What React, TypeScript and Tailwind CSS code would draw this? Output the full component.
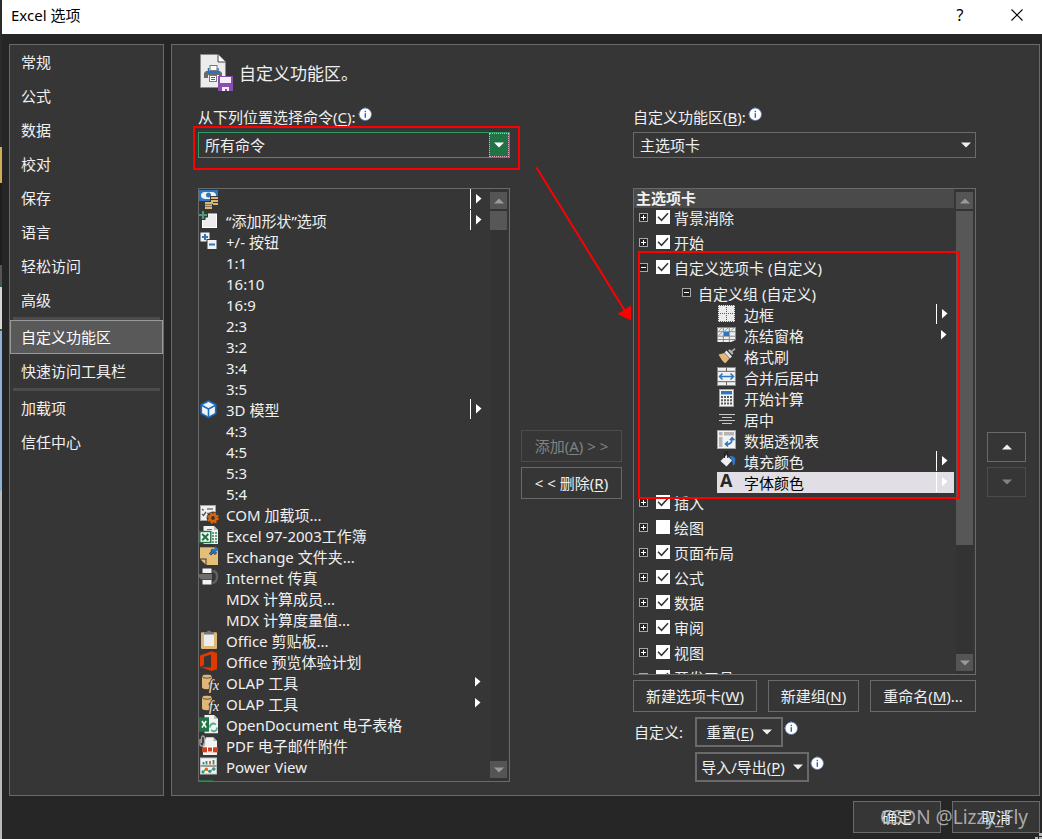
import type { ReactNode } from "react";
import { clsx } from "clsx";

/* ---------- small glyphs ---------- */

function Caret({ dir, className }: { dir: "up" | "down" | "right"; className?: string }) {
  if (dir === "right") {
    return (
      <svg width="6" height="10" viewBox="0 0 6 10" className={className} aria-hidden="true">
        <path d="M0 0 L5.5 4.5 L0 9.5 Z" fill="currentColor" />
      </svg>
    );
  }
  return (
    <svg width="10" height="6" viewBox="0 0 10 6" className={className} aria-hidden="true">
      <path d={dir === "down" ? "M0 0.5 H10 L5 5.5 Z" : "M0 5.5 H10 L5 0.5 Z"} fill="currentColor" />
    </svg>
  );
}

function InfoIcon() {
  return (
    <svg width="14" height="14" viewBox="0 0 14 14" className="shrink-0" aria-hidden="true">
      <path d="M7 0 L8.5 1.5 H5.5 Z M0 7 L1.5 5.5 V8.5 Z" fill="#5d7fb5" />
      <circle cx="7.3" cy="7.3" r="6.2" fill="#fff" stroke="#5878b0" strokeWidth="0.8" />
      <rect x="6.6" y="3.8" width="1.4" height="1.4" fill="#3f5f9f" />
      <rect x="6.6" y="6.2" width="1.4" height="4.6" fill="#3f5f9f" />
    </svg>
  );
}

function RibbonIcon() {
  return (
    <svg width="35" height="38" viewBox="0 0 35 38" className="shrink-0" aria-hidden="true">
      <path d="M0.5 0.5 H18 L25.5 8 V33.5 H0.5 Z" fill="#ececec" stroke="#8a8a8a" />
      <path d="M18 0.5 V8 H25.5" fill="#fff" stroke="#444" />
      <path d="M4 19 L6 17 H20 L22 19 V24 H19 V21 H8 V24 H4 Z" fill="#6a6a6a" />
      <path d="M8.5 14 V18.5 H18 V14" fill="none" stroke="#2f6eb5" strokeWidth="1.5" />
      <rect x="10" y="11.5" width="7" height="5" fill="#fff" stroke="#777" />
      <rect x="9.5" y="21.5" width="7" height="6" fill="#fff" stroke="#777" />
      <path d="M11 23.5 H15 M11 25.5 H15" stroke="#2f6eb5" />
      <rect x="18" y="22" width="15" height="15" fill="#8a4fae" />
      <rect x="20" y="23" width="11" height="6" fill="#f5eefa" />
      <path d="M22 33 H29 V37 H27 V35 H25 V37 H22 Z" fill="#f5eefa" />
    </svg>
  );
}

/* ---------- command icons, drawn on a 20 x 21 field ---------- */

const icons: Record<string, ReactNode> = {
  money: (
    <>
      <rect x="0" y="1" width="19" height="11" fill="#2f76c0" />
      <path d="M2 6.5 Q2 3 6 3 H13 Q17 3 17 6.5 Q15 10 10 10 H6 Q2 9.5 2 6.5" fill="#f1f1f1" />
      <circle cx="9.5" cy="6" r="2.5" fill="#2f76c0" />
      <path d="M11 7 H20 V18 H14 V20 H5 V12 H11 Z" fill="#363636" />
      <path d="M12 9 H19 M12 12 H19 M14 15 H19 M6 14 H14 M6 16.5 H13 M6 19 H13" stroke="#dcb572" strokeWidth="2" />
    </>
  ),
  addShape: (
    <>
      <rect x="3.5" y="4" width="14" height="13.5" fill="#ececec" stroke="#fff" />
      <path d="M4 0 V10 M-1 5 H9" stroke="#363636" strokeWidth="5" />
      <path d="M4 1 V9 M0 5 H8" stroke="#4c9a7b" strokeWidth="2.2" />
    </>
  ),
  plusMinus: (
    <>
      <rect x="1.5" y="1.5" width="9" height="9" fill="#f2f2f2" />
      <path d="M6 3 V9 M3 6 H9" stroke="#2f76c0" strokeWidth="2" />
      <rect x="7.5" y="8" width="11" height="11" fill="#363636" />
      <rect x="8.5" y="9" width="9" height="9" fill="#f2f2f2" />
      <path d="M10 13.5 H16" stroke="#2f76c0" strokeWidth="2" />
    </>
  ),
  cube: (
    <>
      <path d="M9.5 2 L16.7 5.8 V14.5 L9.5 18.4 L2.3 14.5 V5.8 Z" fill="#f4f4f4" stroke="#1b6fc2" strokeWidth="1.6" />
      <path d="M3 6.5 L9.5 10 L16 6.5 M9.5 10 V18" fill="none" stroke="#1b6fc2" strokeWidth="1.6" />
    </>
  ),
  com: (
    <>
      <rect x="1.5" y="1.5" width="15" height="15" fill="#f0f0f0" stroke="#a5a5a5" />
      <path d="M8 5 H14 M8 9.5 H13" stroke="#777" strokeWidth="1.5" />
      <path d="M3 5 L4.5 6.5 M3 10 L4.5 11.5 L7 8" fill="none" stroke="#555" strokeWidth="1.3" />
      <circle cx="14" cy="14" r="6.4" fill="#363636" />
      <circle cx="14" cy="14" r="3.2" fill="none" stroke="#d9650f" strokeWidth="2.6" />
      <circle cx="14" cy="14" r="4.9" fill="none" stroke="#d9650f" strokeWidth="1.8" strokeDasharray="2.2 1.65" />
    </>
  ),
  xls: (
    <>
      <path d="M4.5 1 H15 L19 5 V19 H4.5 Z" fill="#f2f2f2" />
      <path d="M15 1 V5 H19" fill="#bbb" />
      <path d="M8 4.5 H13" stroke="#777" />
      <path d="M13 8 H18 M13 11 H18 M13 14 H18 M13 17 H18" stroke="#56a57c" strokeWidth="2" />
      <path d="M15.5 6.5 V18" stroke="#f2f2f2" />
      <rect x="0.8" y="6.5" width="11" height="11" fill="#f5f5f5" stroke="#217346" strokeWidth="1.4" />
      <path d="M3.2 9 L9.3 15.2 M9.3 9 L3.2 15.2" stroke="#217346" strokeWidth="2" />
    </>
  ),
  note: (
    <>
      <rect x="1" y="1.3" width="18" height="17.7" fill="#e3bf79" />
      <path d="M1 12.5 H7.5 V19 H1 Z" fill="#363636" />
      <path d="M1.5 13.5 H6.5 V18.5 Z" fill="#e3bf79" />
      <path d="M11 8.5 L13.5 6 M12.5 3.5 L17 8 M16 0.5 L19.5 4" stroke="#3a3a3a" strokeWidth="3" />
      <path d="M11 8.5 L13.5 6 M12.5 3.5 L17 8 M15.5 1 L19.3 4.5" stroke="#2f76c0" strokeWidth="1.7" />
      <path d="M14 4 L16.5 2 L18.5 4 L16.5 6.5 Z" fill="#2f76c0" />
    </>
  ),
  fax: (
    <>
      <path d="M0 7 H13 V12.5 H2 L0 10 Z" fill="#6d6d6d" />
      <rect x="3.5" y="1.5" width="9" height="4.5" fill="#f4f4f4" />
      <rect x="3.5" y="13" width="9" height="4.5" fill="#f4f4f4" />
      <path d="M13.5 4 Q18 4 18 9.5 Q18 15 13.5 16" fill="none" stroke="#606060" strokeWidth="2.4" />
    </>
  ),
  clipboard: (
    <>
      <rect x="2" y="2.3" width="16" height="16.7" rx="1" fill="#dfb878" />
      <rect x="5" y="4" width="10" height="12" fill="#ededed" />
      <path d="M5 4.5 V2 H8 Q8 0.5 10 0.5 Q12 0.5 12 2 H15 V4.5 Z" fill="#777" />
    </>
  ),
  office: (
    <path
      fillRule="evenodd"
      fill="#e03a00"
      d="M1 4.5 L12.5 0.3 L18 2 V18.2 L12.5 20 L1 15.8 Z M5 5.8 V14.2 L12 16.5 V3.5 Z M1 15.8 L5 14.2 L12 16.8 Z"
    />
  ),
  olap: (
    <>
      <path d="M3 4.5 V15 Q3 17.2 8 17.2 Q13 17.2 13 15 V4.5 Z" fill="#dfb878" />
      <ellipse cx="8" cy="4.2" rx="5" ry="2" fill="#dfb878" stroke="#363636" strokeWidth="0.8" />
      <text
        x="10"
        y="17.5"
        fontFamily="Liberation Serif, serif"
        fontStyle="italic"
        fontSize="14"
        fill="#efefef"
        stroke="#363636"
        strokeWidth="2"
        paintOrder="stroke"
      >
        fx
      </text>
    </>
  ),
  ods: (
    <>
      <path d="M5.5 1 H15 L19 5 V19.3 H5.5 Z" fill="#f2f2f2" />
      <path d="M15 1 V5 H19" fill="#bbb" />
      <path d="M11 13.5 Q11 9.5 15 9.5 L17 10.5 M18 13.5 Q18 17.3 14.3 17.3 L12 16" fill="none" stroke="#56b08a" strokeWidth="1.8" />
      <rect x="0" y="3.3" width="10" height="14.4" fill="#217346" />
      <path d="M3 7 L7.2 13.6 M7.2 7 L3 13.6" stroke="#fff" strokeWidth="1.6" />
    </>
  ),
  pdf: (
    <>
      <path d="M7 2.3 H14.5 L18 6 V20 H4 V10 Z" fill="#f2f2f2" />
      <path d="M14.5 2.3 V6 H18" fill="#aaa" />
      <rect x="3" y="12.3" width="16" height="5" fill="#d0401c" />
      <rect x="8.5" y="12" width="5" height="5" fill="#d0401c" stroke="#fff" />
      <path d="M1 4 V9 Q1 11 3.2 11 Q5.5 11 5.5 9 V3 Q5.5 1 3.5 1 Q2.5 1 2.5 3 V8" fill="none" stroke="#a5a5a5" strokeWidth="1.3" />
    </>
  ),
  powerView: (
    <>
      <rect x="1.5" y="2" width="16" height="16" fill="#f2f2f2" stroke="#c5c5c5" />
      <path d="M1.5 10 H17.5" stroke="#777" strokeWidth="1.4" />
      <path d="M4.5 8.5 V6 M7.5 8.5 V5 M14.5 8.5 V4" stroke="#3b8f78" strokeWidth="1.8" />
      <path d="M11 8.5 V5" stroke="#d9650f" strokeWidth="1.8" />
      <path d="M4 16 L7 13 L10 15.5 L15 12.5" fill="none" stroke="#3b8f78" />
      <circle cx="4" cy="15.8" r="1.6" fill="#3b8f78" />
      <circle cx="7.3" cy="13.3" r="1.7" fill="#d9650f" />
      <circle cx="10.8" cy="15.3" r="1.6" fill="#3b8f78" />
      <circle cx="14.8" cy="13" r="1.8" fill="#3b8f78" />
    </>
  ),
  sheet: <rect x="0" y="3" width="14" height="14" fill="#217346" />,
  borders: (
    <>
      <rect x="1" y="1" width="17" height="17" fill="#ececec" />
      <path
        d="M1 1.5 H18 M1 9.5 H18 M1 17.5 H18 M1.5 1 V18 M9.5 1 V18 M17.5 1 V18"
        stroke="#5a5a5a"
        strokeDasharray="1 1"
        shapeRendering="crispEdges"
      />
    </>
  ),
  freeze: (
    <>
      <path d="M0.5 2.5 H18.5 V15 L14 17 H0.5 Z" fill="#f0f0f0" />
      <path d="M0.5 6.7 H18.5 M0.5 11.2 H18.5 M0.5 14.5 H15 M6.3 3 V17 M12.3 3 V17" stroke="#8a8a8a" />
      <rect x="7" y="7" width="5" height="4" fill="#2f76c0" />
      <path d="M1.5 6 L5 3 M7.5 6 L11 3 M13.5 6 L17 3 M1.5 10.5 L5 7.5" stroke="#6ea3dc" />
      <rect x="0.5" y="2.5" width="18" height="12" fill="none" stroke="#8a8a8a" />
    </>
  ),
  brush: (
    <>
      <path d="M1.5 8.5 L7.5 7 L12.5 12.5 L8.5 17.3 Q6 16 4.5 13.5 Z" fill="#e0b877" />
      <path d="M8.5 5.5 L14 11.5" stroke="#e6e6e6" strokeWidth="2.6" />
      <path d="M11 4.5 L15 8.8 L16.5 7.2 L15.2 6 L18.5 3.2 L17.5 2 L14.5 4.8 L12.8 3.2 Z" fill="#b5b5b5" />
    </>
  ),
  merge: (
    <>
      <rect x="0.5" y="0.5" width="18" height="18" fill="#f0f0f0" stroke="#8a8a8a" />
      <path d="M0.5 4.3 H18.5 M0.5 14.7 H18.5 M9.5 0.5 V4.3 M9.5 14.7 V18.5" stroke="#666" />
      <path d="M3 9.5 H16 M5.5 6.5 L2.5 9.5 L5.5 12.5 M13.5 6.5 L16.5 9.5 L13.5 12.5" fill="none" stroke="#2f76c0" strokeWidth="1.5" />
    </>
  ),
  calculator: (
    <>
      <rect x="2.5" y="1.5" width="14" height="17" fill="#f4f4f4" stroke="#a5a5a5" />
      <rect x="4" y="3" width="11" height="3.4" fill="#2f76c0" />
      <path d="M4 9 H15 M4 12.3 H15 M4 15.6 H15" stroke="#5a5a5a" strokeWidth="2" strokeDasharray="2 1" />
    </>
  ),
  center: <path d="M2 5.5 H18 M5 8.5 H15 M2 11.5 H18 M5 14.5 H15" stroke="#c9c9c9" />,
  pivot: (
    <>
      <rect x="0.5" y="0.5" width="18" height="18" fill="#f4f4f4" stroke="#a5a5a5" />
      <rect x="2" y="2" width="3.5" height="3.5" fill="#b5b5b5" />
      <rect x="7" y="2" width="10" height="3.5" fill="#b5b5b5" />
      <rect x="2" y="7" width="3.5" height="10" fill="#b5b5b5" />
      <path d="M9 14 Q15 15 15.2 8.5 M12.8 10.2 L15.2 7.6 L17.4 10.2 M11 11.5 L8.4 14 L11 16.5" fill="none" stroke="#2f76c0" strokeWidth="1.6" />
    </>
  ),
  fill: (
    <>
      <path d="M12.5 5 Q18.6 4.5 18.4 9 Q18.3 13 16.5 15 Q15.5 12.5 15 9.5 Z" fill="#2f76c0" />
      <path d="M3.5 10 L9.5 4 L15 9.5 L9.5 15.5 Z" fill="#f0f0f0" />
      <path d="M7.5 7 V2.5 Q7.5 0.8 9 0.8 Q10.8 0.8 10.8 2.5 V7" fill="none" stroke="#222" strokeWidth="1.2" />
    </>
  ),
  fontColor: (
    <text x="3" y="15" fontFamily="Open Sans, Noto Sans, sans-serif" fontWeight="700" fontSize="18" fill="#262626">
      A
    </text>
  ),
};

function CommandIcon({ name }: { name?: string }) {
  return (
    <svg width="20" height="21" viewBox="0 0 20 21" className="shrink-0" aria-hidden="true">
      {name ? icons[name] : null}
    </svg>
  );
}

/* ---------- data ---------- */

type Menu = "split" | "menu";
type Command = { label: string; icon?: string; menu?: Menu };

const categories = [
  ["常规", "公式", "数据", "校对", "保存", "语言", "轻松访问", "高级"],
  ["自定义功能区", "快速访问工具栏"],
  ["加载项", "信任中心"],
];

const commands: Command[] = [
  { label: "", icon: "money", menu: "split" },
  { label: "“添加形状”选项", icon: "addShape", menu: "split" },
  { label: "+/- 按钮", icon: "plusMinus" },
  { label: "1:1" },
  { label: "16:10" },
  { label: "16:9" },
  { label: "2:3" },
  { label: "3:2" },
  { label: "3:4" },
  { label: "3:5" },
  { label: "3D 模型", icon: "cube", menu: "split" },
  { label: "4:3" },
  { label: "4:5" },
  { label: "5:3" },
  { label: "5:4" },
  { label: "COM 加载项...", icon: "com" },
  { label: "Excel 97-2003工作簿", icon: "xls" },
  { label: "Exchange 文件夹...", icon: "note" },
  { label: "Internet 传真", icon: "fax" },
  { label: "MDX 计算成员..." },
  { label: "MDX 计算度量值..." },
  { label: "Office 剪贴板...", icon: "clipboard" },
  { label: "Office 预览体验计划", icon: "office" },
  { label: "OLAP 工具", icon: "olap", menu: "menu" },
  { label: "OLAP 工具", icon: "olap", menu: "menu" },
  { label: "OpenDocument 电子表格", icon: "ods" },
  { label: "PDF 电子邮件附件", icon: "pdf" },
  { label: "Power View", icon: "powerView" },
  { label: "", icon: "sheet" },
];

const groupCommands: Command[] = [
  { label: "边框", icon: "borders", menu: "split" },
  { label: "冻结窗格", icon: "freeze", menu: "menu" },
  { label: "格式刷", icon: "brush" },
  { label: "合并后居中", icon: "merge" },
  { label: "开始计算", icon: "calculator" },
  { label: "居中", icon: "center" },
  { label: "数据透视表", icon: "pivot" },
  { label: "填充颜色", icon: "fill", menu: "split" },
  { label: "字体颜色", icon: "fontColor", menu: "split" },
];

/* ---------- building blocks ---------- */

function MenuMark({ menu }: { menu?: Menu }) {
  if (!menu) return null;
  return (
    <span
      className={clsx(
        "ml-auto flex h-5 w-[18px] shrink-0 items-center pl-[5px] text-white",
        menu === "split" && "border-l border-white",
      )}
    >
      <Caret dir="right" />
    </span>
  );
}

function CommandRow({ command, selected }: { command: Command; selected?: boolean }) {
  return (
    <li className={clsx("flex h-[21px] gap-[7px]", selected && "bg-[#e1dfe5] text-black")}>
      <CommandIcon name={command.icon} />
      <span className="pt-px whitespace-nowrap">{command.label}</span>
      <MenuMark menu={command.menu} />
    </li>
  );
}

function Key({ children }: { children: string }) {
  return (
    <>
      (<span className="underline underline-offset-2">{children}</span>)
    </>
  );
}

function Button({ children, className, disabled, label }: { children: ReactNode; className?: string; disabled?: boolean; label?: string }) {
  return (
    <button
      type="button"
      disabled={disabled}
      aria-label={label}
      className={clsx(
        "flex shrink-0 items-center justify-center whitespace-nowrap",
        disabled ? "border-[#4c4c4c] text-[#828282]" : "border-[#6a6a6a] text-[#f0f0f0]",
        className,
      )}
    >
      {children}
    </button>
  );
}

function Scrollbar({ thumb }: { thumb: string }) {
  return (
    <div className="mr-[2px] flex w-[17px] shrink-0 flex-col bg-[#333333] py-[3px]">
      <button type="button" aria-label="向上滚动" className="flex h-[17px] shrink-0 items-center justify-center bg-[#555555] text-[#9a9a9a]">
        <Caret dir="up" />
      </button>
      <div className={clsx("mt-[2px] shrink-0 bg-[#575757]", thumb)} />
      <button type="button" aria-label="向下滚动" className="mt-auto flex h-[17px] shrink-0 items-center justify-center bg-[#555555] text-[#9a9a9a]">
        <Caret dir="down" />
      </button>
    </div>
  );
}

function Expander({ open }: { open?: boolean }) {
  return (
    <button type="button" aria-label={open ? "折叠" : "展开"} className="mt-[5px] h-[9px] w-[9px] shrink-0">
      <svg width="9" height="9" viewBox="0 0 9 9" aria-hidden="true">
        <rect x="0.5" y="0.5" width="8" height="8" fill="#222" stroke="#a8a8a8" />
        <path d={open ? "M2 4.5 H7" : "M2 4.5 H7 M4.5 2 V7"} stroke="#fff" />
      </svg>
    </button>
  );
}

function TabRow({ label, checked = true, open }: { label: string; checked?: boolean; open?: boolean }) {
  return (
    <div className="flex h-[25px] shrink-0 items-start pl-[5px]">
      <Expander open={open} />
      <label className="ml-2 flex items-start gap-1">
        <span className="relative mt-[2px] h-[14px] w-[14px]">
          <input type="checkbox" defaultChecked={checked} className="peer block h-[14px] w-[14px] appearance-none bg-white" />
          <svg viewBox="0 0 14 14" className="pointer-events-none absolute inset-0 hidden peer-checked:block" aria-hidden="true">
            <path d="M2 6.8 L5.5 10.3 L12 3.2" fill="none" stroke="#333" strokeWidth="1.5" />
          </svg>
        </span>
        <span>{label}</span>
      </label>
    </div>
  );
}

function DesktopEdge() {
  return (
    <div className="flex w-[2px] shrink-0 flex-col" aria-hidden="true">
      <div className="h-[147px] bg-[#2b2b2b]" />
      <div className="h-9 bg-[#cfae55]" />
      <div className="h-[82px] bg-[#1e1e1e]" />
      <div className="h-5 bg-[#555555]" />
      <div className="h-[46px] border-y-2 border-[#1f6b3f] bg-[#d8d8d4]" />
      <div className="h-[160px] bg-[#8fb3d6]" />
      <div className="flex-1 bg-[#b9bcbe]" />
    </div>
  );
}

/* ---------- dialog ---------- */

export default function App() {
  return (
    <div className="flex h-screen min-h-[640px] overflow-hidden bg-[#262626] font-['Noto_Sans','Noto_Sans_CJK_SC',sans-serif] text-[15px] leading-[21px] text-[#f0f0f0]">
      <DesktopEdge />
      <div className="flex min-w-0 flex-1 flex-col">
        <header className="flex h-[34px] shrink-0 items-center bg-white pl-[9px] text-black">
          <h1 className="flex-1 pb-1">Excel 选项</h1>
          <button type="button" aria-label="帮助" className="h-full w-16 pb-1 text-base">
            ?
          </button>
          <button type="button" aria-label="关闭" className="flex h-full w-[50px] items-center justify-center pb-1">
            <svg width="12" height="12" viewBox="0 0 12 12" aria-hidden="true">
              <path d="M0.5 0.5 L11.5 11.5 M11.5 0.5 L0.5 11.5" stroke="#000" strokeWidth="1.1" />
            </svg>
          </button>
        </header>

        <div className="flex min-h-0 flex-1 gap-[7px] pt-[10px] pr-[2px] pl-[7px]">
          <nav className="w-[155px] shrink-0 border border-[#6a6a6a] bg-[#363636]">
            {categories.map((group, index) => (
              <div key={group[0]}>
                {index > 0 && <hr className="mx-[3px] h-[3px] border-0 bg-[#4c4c4c]" />}
                {group.map((item) => (
                  <a
                    key={item}
                    href="#"
                    className={clsx(
                      "flex h-[34px] items-center border pl-[10px]",
                      item === "自定义功能区" ? "border-[#999999] bg-[#595959] text-white" : "border-transparent",
                    )}
                  >
                    {item}
                  </a>
                ))}
              </div>
            ))}
          </nav>

          <main className="flex min-w-0 flex-1 flex-col border border-[#6a6a6a] bg-[#363636] pr-[13px] pb-[13px] pl-[26px]">
            <div className="flex h-[61px] shrink-0 items-center gap-1 pb-[5px] pl-[2px]">
              <RibbonIcon />
              <h2 className="text-[17px]">自定义功能区。</h2>
            </div>

            <div className="grid min-h-0 flex-1 grid-cols-[minmax(0,312fr)_101px_minmax(0,343fr)_39px] grid-rows-[minmax(0,1fr)] gap-x-[11px]">
              {/* available commands */}
              <section className="flex min-h-0 flex-col">
                <div className="flex h-[26px] shrink-0 items-start gap-[2px] pt-px">
                  <label htmlFor="source">
                    从下列位置选择命令
                    <Key>C</Key>:
                  </label>
                  <InfoIcon />
                </div>
                <div className="relative flex h-[26px] shrink-0 border border-[#2f9e62]">
                  <select id="source" className="min-w-0 flex-1 appearance-none bg-transparent pl-[6px] outline-none">
                    <option>所有命令</option>
                  </select>
                  <span className="pointer-events-none flex w-5 items-center justify-center border border-dotted border-[#e8a9c4] bg-[#217346] text-white">
                    <Caret dir="down" />
                  </span>
                  <div className="pointer-events-none absolute -top-[7px] -right-[11px] -bottom-[13px] -left-[6px] border-2 border-[#fe0000]" />
                </div>
                <div className="mt-[30px] flex min-h-0 flex-1 overflow-hidden border border-[#6a6a6a]">
                  <ul className="mr-[2px] min-w-0 flex-1 overflow-hidden">
                    {commands.map((command, index) => (
                      <CommandRow key={index} command={command} />
                    ))}
                  </ul>
                  <Scrollbar thumb="h-[19px]" />
                </div>
              </section>

              {/* transfer buttons */}
              <section className="relative flex flex-col justify-center gap-[5px] pt-[41px]">
                <Button disabled className="h-8 border">
                  添加
                  <Key>A</Key>&nbsp;&gt;&nbsp;&gt;
                </Button>
                <Button className="h-8 border">
                  &lt;&nbsp;&lt;&nbsp;删除
                  <Key>R</Key>
                </Button>
                <svg width="98" height="156" viewBox="0 0 98 156" className="pointer-events-none absolute top-[60px] left-[14px] z-10 max-w-none" aria-hidden="true">
                  <path d="M1.5 1.5 L90 145" stroke="#fe0000" strokeWidth="2" />
                  <path d="M82.5 148 L96 139.5 L96 154.5 Z" fill="#fe0000" />
                </svg>
              </section>

              {/* ribbon tabs */}
              <section className="flex min-h-0 flex-col">
                <div className="flex h-[26px] shrink-0 items-start gap-[2px] pt-px">
                  <label htmlFor="target">
                    自定义功能区
                    <Key>B</Key>:
                  </label>
                  <InfoIcon />
                </div>
                <div className="relative flex h-[26px] shrink-0 border border-[#6a6a6a]">
                  <select id="target" className="min-w-0 flex-1 appearance-none bg-transparent pl-[6px] outline-none">
                    <option>主选项卡</option>
                  </select>
                  <span className="pointer-events-none absolute inset-y-0 right-1 flex items-center">
                    <Caret dir="down" />
                  </span>
                </div>
                <div className="relative mt-[30px] flex min-h-0 flex-1 overflow-hidden border border-[#6a6a6a]">
                  <div className="mr-[2px] flex min-w-0 flex-1 flex-col">
                    <div className="h-[19px] shrink-0 bg-[#4a4a4a] pl-[2px] leading-[19px] font-bold">主选项卡</div>
                    <TabRow label="背景消除" />
                    <TabRow label="开始" />
                    <TabRow label="自定义选项卡 (自定义)" open />
                    <div className="flex h-[21px] shrink-0 items-start gap-[7px] pl-12">
                      <Expander open />
                      <span className="pt-px">自定义组 (自定义)</span>
                    </div>
                    <ul className="shrink-0 pl-[83px]">
                      {groupCommands.map((command) => (
                        <CommandRow key={command.label} command={command} selected={command.icon === "fontColor"} />
                      ))}
                    </ul>
                    <TabRow label="插入" />
                    <TabRow label="绘图" checked={false} />
                    <TabRow label="页面布局" />
                    <TabRow label="公式" />
                    <TabRow label="数据" />
                    <TabRow label="审阅" />
                    <TabRow label="视图" />
                    <TabRow label="开发工具" />
                  </div>
                  <Scrollbar thumb="h-[334px]" />
                  <div className="pointer-events-none absolute top-[62px] right-[15px] left-1 h-[248px] border-2 border-[#fe0000]" />
                </div>
                <div className="mt-[5px] flex shrink-0 justify-between">
                  <Button className="h-8 w-[124px] border">
                    新建选项卡
                    <Key>W</Key>
                  </Button>
                  <Button className="h-8 w-[91px] border">
                    新建组
                    <Key>N</Key>
                  </Button>
                  <Button className="h-8 w-[106px] border">
                    重命名
                    <Key>M</Key>...
                  </Button>
                </div>
                <div className="mt-[5px] grid shrink-0 grid-cols-[62px_1fr] gap-y-[5px]">
                  <span className="self-center pl-px">自定义:</span>
                  <div className="flex items-start gap-px">
                    <Button className="h-[30px] w-[88px] gap-2 border-2">
                      <span>
                        重置
                        <Key>E</Key>
                      </span>
                      <Caret dir="down" />
                    </Button>
                    <span className="pt-1">
                      <InfoIcon />
                    </span>
                  </div>
                  <div className="col-start-2 flex items-start gap-px">
                    <Button className="h-[30px] w-[114px] gap-2 border-2">
                      <span>
                        导入/导出
                        <Key>P</Key>
                      </span>
                      <Caret dir="down" />
                    </Button>
                    <span className="pt-1">
                      <InfoIcon />
                    </span>
                  </div>
                </div>
              </section>

              {/* ordering buttons */}
              <section className="flex flex-col justify-center gap-[5px] pt-[41px]">
                <Button className="h-[30px] border" label="上移">
                  <Caret dir="up" />
                </Button>
                <Button className="h-[30px] border" label="下移" disabled>
                  <Caret dir="down" />
                </Button>
              </section>
            </div>
          </main>
        </div>

        <footer className="relative flex h-[43px] shrink-0 items-start justify-end gap-[11px] pt-[5px] pr-[2px]">
          <Button className="h-8 w-[88px] border bg-[#363636]">确定</Button>
          <Button className="h-8 w-[88px] border bg-[#363636]">取消</Button>
          <span className="pointer-events-none absolute top-[9px] right-[14px] text-[19px] leading-6 text-[#c0c0c0]/85">CSDN @Lizzy_Fly</span>
          <svg width="8" height="6" viewBox="0 0 8 6" className="absolute right-0 bottom-0" aria-hidden="true">
            <path d="M5 0 H8 V3 H5 Z M1 4 H4 V6 H1 Z M5 4 H8 V6 H5 Z" fill="#b5b5b5" />
          </svg>
        </footer>
      </div>
    </div>
  );
}
